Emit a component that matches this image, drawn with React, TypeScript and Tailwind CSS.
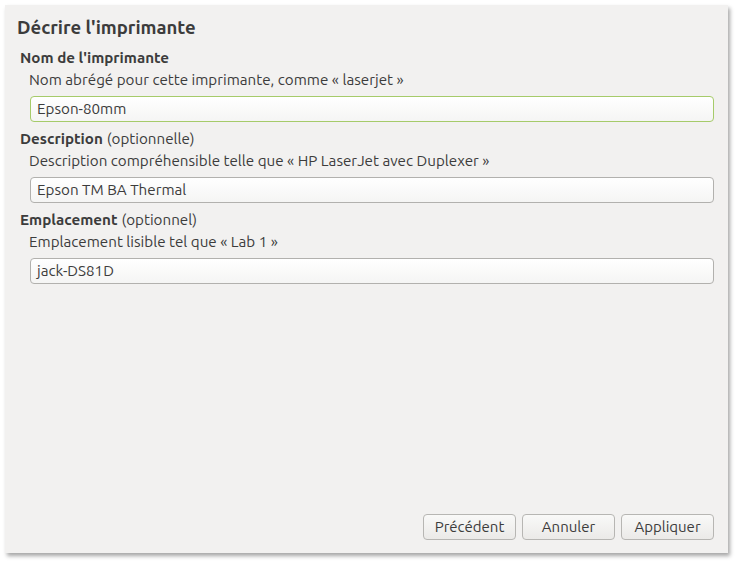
import React from 'react'

const font = { fontFamily: 'Ubuntu, "Noto Sans", "Open Sans", sans-serif' }

function Field({
  label,
  hint,
  help,
  value,
  focused,
}: {
  label: string
  hint?: string
  help: string
  value: string
  focused?: boolean
}) {
  return (
    <div className="flex flex-col">
      <div className="pl-[15px] h-[22px] flex items-center text-[15.2px] text-[#3c3c3c]">
        <span className="font-bold">{label}</span>
        {hint && <span className="ml-1">{hint}</span>}
      </div>
      <div className="pl-[24px] h-[22px] flex items-center text-[15.2px] text-[#3c3c3c]">{help}</div>
      <div
        className={`ml-[25px] mr-[14px] mt-[5px] h-[26px] rounded-[4px] border px-[6px] flex items-center text-[15.2px] text-[#3c3c3c] bg-gradient-to-b from-white to-[#f5f5f4] ${
          focused ? 'border-[#a6cb6a]' : 'border-[#b2b1ae]'
        }`}
      >
        {value}
      </div>
    </div>
  )
}

function Button({ children }: { children: React.ReactNode }) {
  return (
    <button className="w-[93px] h-[26px] rounded-[4px] border border-[#b7b6b3] bg-gradient-to-b from-[#f9f9f8] to-[#ebeae8] text-[15px] text-[#3c3c3c] flex items-center justify-center">
      {children}
    </button>
  )
}

export default function App() {
  return (
    <div className="w-[736px] h-[562px] bg-white" style={font}>
      <div className="relative left-[5px] top-[5px] w-[723px] h-[548px] bg-[#f2f1f0] shadow-[2px_3px_4px_rgba(0,0,0,0.35)] flex flex-col">
        <div className="pl-[12px] pt-[10px] h-[42px] text-[18.5px] font-bold text-[#3c3c3c] leading-[24px]">
          Décrire l'imprimante
        </div>
        <div className="flex flex-col gap-[6px]">
          <Field
            label="Nom de l'imprimante"
            help="Nom abrégé pour cette imprimante, comme « laserjet »"
            value="Epson-80mm"
            focused
          />
          <Field
            label="Description"
            hint="(optionnelle)"
            help="Description compréhensible telle que « HP LaserJet avec Duplexer »"
            value="Epson TM BA Thermal"
          />
          <Field
            label="Emplacement"
            hint="(optionnel)"
            help="Emplacement lisible tel que « Lab 1 »"
            value="jack-DS81D"
          />
        </div>
        <div className="mt-auto mb-[13px] mr-[14px] flex justify-end gap-[6px]">
          <Button>Précédent</Button>
          <Button>Annuler</Button>
          <Button>Appliquer</Button>
        </div>
      </div>
    </div>
  )
}
